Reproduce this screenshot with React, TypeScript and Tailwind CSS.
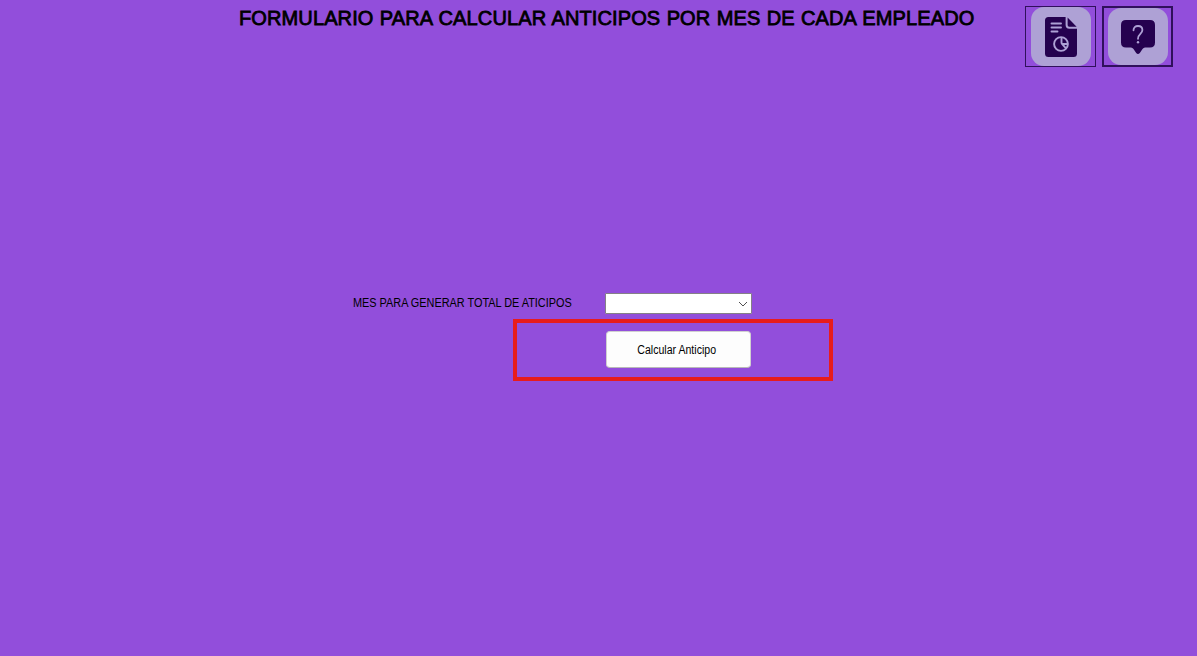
function ReportIcon() {
  return (
    <svg viewBox="0 0 32 40" className="h-10 w-8" fill="none">
      <path d="M3.500 0H20.600v8q0 3.700 3.700 3.700H32v24.800q0 3.500-3.500 3.500h-25Q0 40 0 36.500v-33Q0 0 3.500 0Z" fill="#25014f" />
      <path d="M22.600.6 31.600 9.700h-7.300q-1.700 0-1.700-1.700Z" fill="#25014f" />
      <path d="M6.500 6.500h9.500M6.500 10.500h9.500M6.500 14.500h6" stroke="#aea1d5" strokeWidth="1.900" strokeLinecap="round" />
      <circle cx="16" cy="27" r="6.900" stroke="#aea1d5" strokeWidth="1.900" />
      <path d="M16.500 20v5.500q0 1 .7 1.700l4 4.500M16.800 27H23" stroke="#aea1d5" strokeWidth="1.900" />
    </svg>
  );
}

function HelpIcon() {
  return (
    <svg viewBox="0 0 34 34" className="h-[34px] w-[34px]" fill="none">
      <path d="M5 0h24q5 0 5 5v17.500q0 5-5 5h-5q-1.500 0-2.500 1.500l-2.700 4q-1.800 2-3.600 0l-2.700-4q-1-1.500-2.500-1.500H5q-5 0-5-5V5Q0 0 5 0Z" fill="#25014f" />
      <path d="M12.500 10.300c0-2.700 1.800-4.300 4.500-4.300s4.400 1.700 4.400 4.100c0 3.900-4.400 3.900-4.400 8.700" stroke="#aea1d5" strokeWidth="1.800" strokeLinecap="round" />
      <circle cx="17" cy="22.200" r="1.200" fill="#aea1d5" />
    </svg>
  );
}

export default function App() {
  return (
    <main className="flex h-[656px] w-full flex-col overflow-hidden bg-[#924edb] font-['Liberation_Sans',sans-serif] text-black">
      <header className="flex h-[293px] items-start pt-[6px] pr-6">
        <h1 className="ml-[239px] w-[786px] text-[20px] leading-6 tracking-[0.12px] [word-spacing:0.65px] whitespace-nowrap [-webkit-text-stroke:0.8px_black]">
          FORMULARIO PARA CALCULAR ANTICIPOS POR MES DE CADA EMPLEADO
        </h1>
        <button aria-label="Reporte" className="flex h-[61px] w-[71px] shrink-0 items-center justify-center border border-[#30105c]">
          <span className="flex h-[59px] w-[60px] items-center justify-center rounded-[13px] bg-[#aea1d5]">
            <ReportIcon />
          </span>
        </button>
        <button aria-label="Ayuda" className="ml-1.5 flex h-[61px] w-[71px] shrink-0 items-center justify-center border-2 border-[#30105c]">
          <span className="flex h-[57px] w-[60px] items-center justify-center rounded-[13px] bg-[#aea1d5]">
            <HelpIcon />
          </span>
        </button>
      </header>
      <div className="flex h-[21px] pl-[353px]">
        <label className="w-[252px] whitespace-nowrap text-[12px] leading-5">
          <span className="inline-block origin-left scale-x-[0.907]">MES PARA GENERAR TOTAL DE ATICIPOS</span>
        </label>
        <button aria-label="Mes" className="flex h-[21px] w-[147px] items-center justify-end rounded-[1px] border border-[#858087] bg-white pr-[3px]">
          <svg viewBox="0 0 10 6" className="mt-px h-1.5 w-2.5" fill="none">
            <path d="m1 1 4 4 4-4" stroke="#505050" />
          </svg>
        </button>
      </div>
      <section className="mt-[5px] ml-[513px] flex h-[62px] w-[320px] border-4 border-[#e81c1c] pt-2 pl-[89px]">
        <button className="flex h-[37px] w-[145px] items-center justify-center rounded-[4px] border border-[#d0d0d0] border-b-[#b8b8b8] bg-[#fdfdfd] pr-[3px] text-[12px] whitespace-nowrap">
          <span className="inline-block scale-x-[0.88]">Calcular Anticipo</span>
        </button>
      </section>
    </main>
  );
}
